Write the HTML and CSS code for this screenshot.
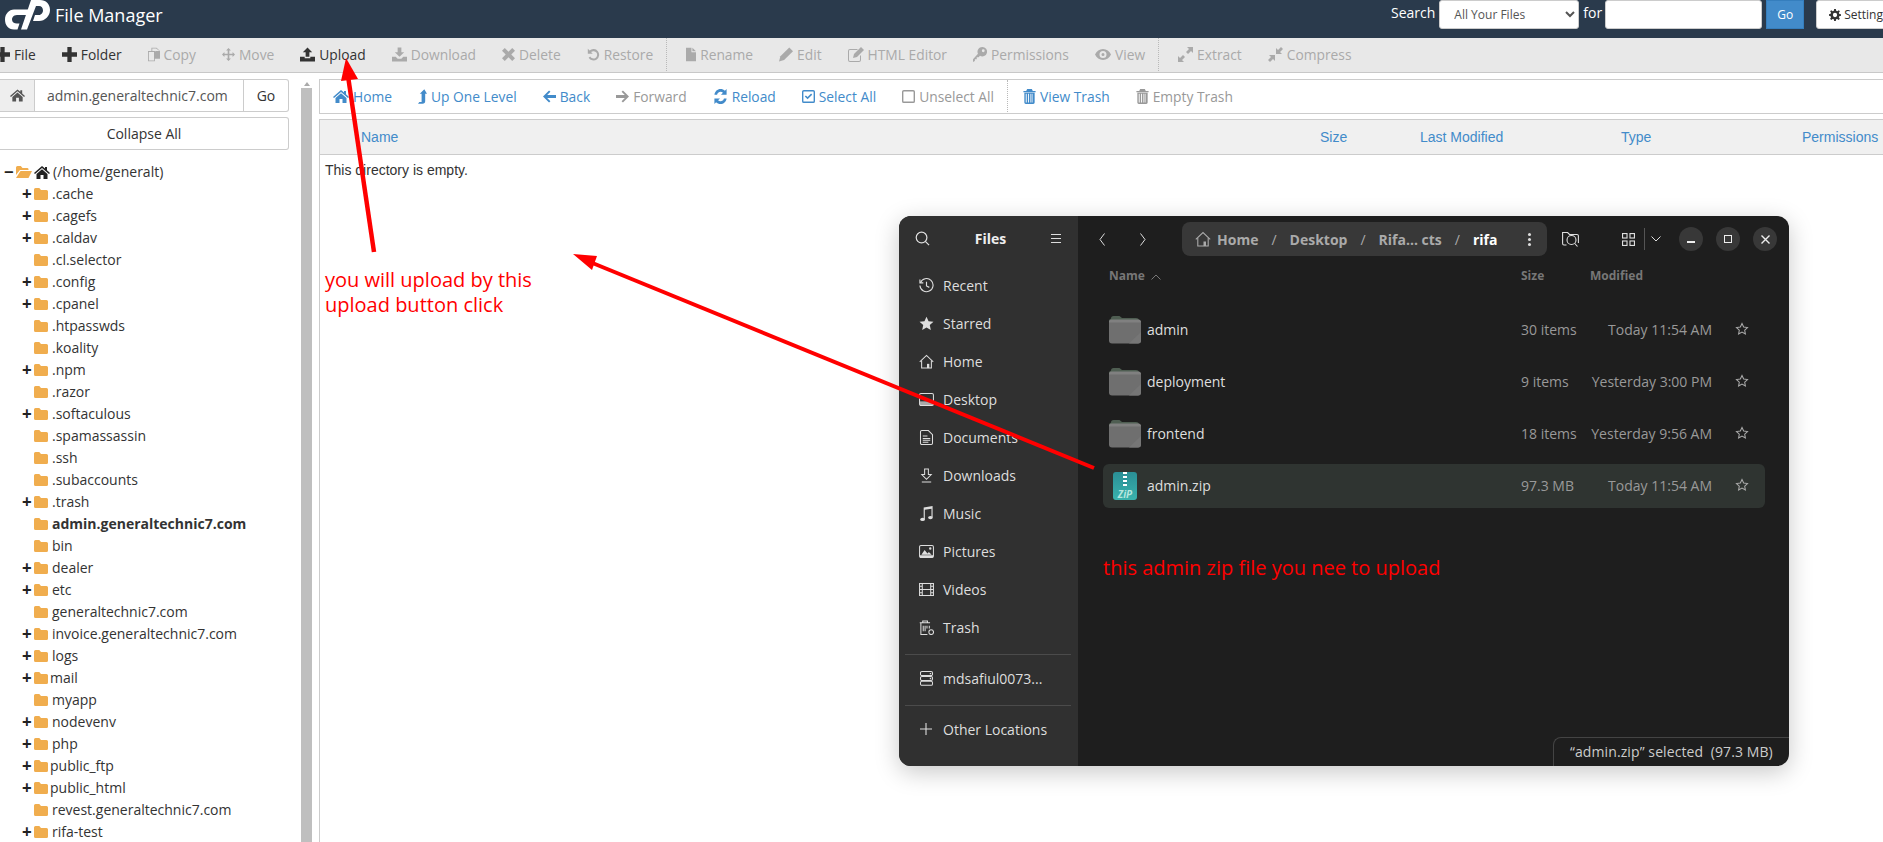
FILE: index.html
```html
<!DOCTYPE html>
<html lang="en">
<head>
    <meta charset="UTF-8">
    <meta name="viewport" content="width=device-width, initial-scale=1.0">
    <title>File Manager</title>
    <link rel="stylesheet" href="styles.css">
</head>
<body>
    <!-- icon sheet -->
    <svg class="icon-sheet" width="0" height="0">
        <symbol id="i-plus" viewBox="0 0 14 14"><path d="M5 0h4v5h5v4H9v5H5V9H0V5h5z"/></symbol>
        <symbol id="i-copy" viewBox="0 0 14 16"><path fill-rule="evenodd" d="M4 0h6l4 4v9H8v3H0V4h4zm1 1v3h3l1 .5V4h4.500L9.500 1zM1 5v10h6V5z"/></symbol>
        <symbol id="i-move" viewBox="0 0 16 16"><path d="M8 0l3 3H9v4h4V5l3 3-3 3V9H9v4h2l-3 3-3-3h2V9H3v2L0 8l3-3v2h4V3H5z"/></symbol>
        <symbol id="i-upload" viewBox="0 0 16 15"><path d="M8 0l5 5h-3v5H6V5H3zM0 10h5v1.500h6V10h5v5H0z"/></symbol>
        <symbol id="i-download" viewBox="0 0 16 15"><path d="M6 0h4v5h3l-5 5-5-5h3zM0 10h4l2 2h4l2-2h4v5H0z"/></symbol>
        <symbol id="i-delete" viewBox="0 0 14 14"><path d="M3 0l4 4 4-4 3 3-4 4 4 4-3 3-4-4-4 4-3-3 4-4-4-4z"/></symbol>
        <symbol id="i-restore" viewBox="0 0 16 16"><path d="M1 1l2.200 2.200A7 7 0 1 1 2 12l2-1.500A4.500 4.500 0 1 0 5 5l2 2H1z"/></symbol>
        <symbol id="i-file" viewBox="0 0 11 15"><path d="M0 0h6v5h5v10H0zM7 0l4 4H7z"/></symbol>
        <symbol id="i-pencil" viewBox="0 0 15 15"><path d="M11 0l4 4-9.500 9.500L0 15l1.500-5.500z"/></symbol>
        <symbol id="i-edit" viewBox="0 0 16 15"><path fill-rule="evenodd" d="M2 2h8L9 3H2a1 1 0 0 0-1 1v9a1 1 0 0 0 1 1h9a1 1 0 0 0 1-1V9l1-1v5a2 2 0 0 1-2 2H2a2 2 0 0 1-2-2V4a2 2 0 0 1 2-2z"/><path d="M13 0l3 3-7 7-4 1 1-4z"/></symbol>
        <symbol id="i-key" viewBox="0 0 15 16"><path fill-rule="evenodd" d="M10 0a5 5 0 1 1-2.500 9.300L6 11H4v2H2v2l-2 1v-3l5.300-5.800A5 5 0 0 1 10 0zm1 2.500a1.500 1.500 0 1 0 0 3 1.500 1.500 0 0 0 0-3z"/></symbol>
        <symbol id="i-eye" viewBox="0 0 16 11"><path fill-rule="evenodd" d="M8 0c3.500 0 6.500 2.200 8 5.500C14.500 8.800 11.500 11 8 11S1.500 8.800 0 5.500C1.500 2.200 4.500 0 8 0zm0 2a3.500 3.500 0 1 0 0 7 3.500 3.500 0 0 0 0-7zM8 4a1.500 1.500 0 1 1 0 3 1.500 1.500 0 0 1 0-3z"/></symbol>
        <symbol id="i-expand" viewBox="0 0 15 15"><path d="M9 0h6v6l-2-2-3 3-2-2 3-3zM5 8l2 2-3 3 2 2H0V9l2 2z"/></symbol>
        <symbol id="i-compress" viewBox="0 0 15 15"><path d="M13 0l2 2-3 3 2 2H8V1l2 2zM1 8h6v6l-2-2-3 3-2-2 3-3z"/></symbol>
        <symbol id="i-home" viewBox="0 0 16 13"><path d="M8 0l3 2.600V1h2v3.300L16 7l-1 1-7-6-7 6-1-1zM8 3.300l5.500 4.700v5H9.500V9h-3v4h-4V8z"/></symbol>
        <symbol id="i-up" viewBox="0 0 10 16"><path d="M7 0l3 5H8v8c0 2-1 3-3 3H0l1.500-2H4V5H2z"/></symbol>
        <symbol id="i-back" viewBox="0 0 14 13"><path d="M6.500 0L8 1.500 4.500 5H14v3H4.500L8 11.500 6.500 13 0 6.500z"/></symbol>
        <symbol id="i-forward" viewBox="0 0 14 13"><path d="M7.500 0L14 6.500 7.500 13 6 11.500 9.500 8H0V5h9.500L6 1.500z"/></symbol>
        <symbol id="i-reload" viewBox="0 0 15 16"><path d="M7.500 0c1.900 0 3.500.7 4.700 1.900L14 0v6H8l2.100-2.100A3.800 3.800 0 0 0 3.800 6H1C1.500 2.600 4.200 0 7.500 0zM1 10h6l-2.100 2.100A3.800 3.800 0 0 0 11.200 10H14c-.5 3.400-3.200 6-6.500 6-1.900 0-3.500-.7-4.700-1.900L1 16z"/></symbol>
        <symbol id="i-checked" viewBox="0 0 14 14"><path fill-rule="evenodd" d="M2 0h10a2 2 0 0 1 2 2v10a2 2 0 0 1-2 2H2a2 2 0 0 1-2-2V2a2 2 0 0 1 2-2zm0 1.500a.5.500 0 0 0-.5.500v10a.5.500 0 0 0 .5.500h10a.5.500 0 0 0 .5-.5V2a.5.500 0 0 0-.5-.5z"/><path d="M3 7l1.200-1.200L6 7.600l3.800-3.800L11 5l-5 5z"/></symbol>
        <symbol id="i-unchecked" viewBox="0 0 14 14"><path fill-rule="evenodd" d="M2 0h10a2 2 0 0 1 2 2v10a2 2 0 0 1-2 2H2a2 2 0 0 1-2-2V2a2 2 0 0 1 2-2zm0 1.500a.5.500 0 0 0-.5.500v10a.5.500 0 0 0 .5.500h10a.5.500 0 0 0 .5-.5V2a.5.500 0 0 0-.5-.5z"/></symbol>
        <symbol id="i-trash" viewBox="0 0 13 16"><path fill-rule="evenodd" d="M4 0h5l1 2h3v1.500H0V2h3zM1 4h11v10.500a1.500 1.500 0 0 1-1.500 1.500h-8A1.500 1.500 0 0 1 1 14.500zm1.500 1v9.500h1V5zm2.500 0v9.500h1V5zm2.500 0v9.500h1V5zm2 0v9.500h.5V5z"/></symbol>
        <symbol id="i-gear" viewBox="0 0 14 14"><path fill-rule="evenodd" d="M6 0h2l.4 2 1.300.5L11.400 1.400l1.300 1.300-1.200 1.700.6 1.300 1.900.3v2l-2 .4-.5 1.300 1.100 1.700-1.300 1.300-1.700-1.100-1.300.5L8 14H6l-.4-1.900-1.300-.5-1.700 1.100-1.300-1.300 1.100-1.700-.5-1.300L0 8V6l1.900-.4.500-1.300-1.100-1.600 1.300-1.300 1.700 1.100 1.300-.5zm1 4.500a2.500 2.500 0 1 0 0 5 2.500 2.500 0 0 0 0-5z"/></symbol>
        <symbol id="i-folder" viewBox="0 0 14 12"><path d="M1.500 0h3.800L7 2h5.500A1.500 1.500 0 0 1 14 3.500v7a1.500 1.500 0 0 1-1.500 1.500h-11A1.500 1.500 0 0 1 0 10.500v-9A1.500 1.500 0 0 1 1.500 0z"/></symbol>
        <symbol id="i-folder-open" viewBox="0 0 16 12"><path d="M1.500 0h3.300L6.500 2h4.700A1.300 1.300 0 0 1 12.500 3.300V4H4L0 9V1.500A1.500 1.500 0 0 1 1.500 0z"/><path d="M4.500 5H16l-3.500 7H0z"/></symbol>
        <symbol id="i-search" viewBox="0 0 16 16"><g fill="none" stroke="currentColor" stroke-width="1.300"><circle cx="7" cy="7" r="5.700"/><path d="M11 11l4 4"/></g></symbol>
        <symbol id="i-recent" viewBox="0 0 16 16"><g fill="none" stroke="currentColor" stroke-width="1.200"><path d="M1.500 5A7 7 0 1 1 1 8"/><path d="M1 1.500V5.200h3.600M8 4v4.500l3 1.500"/></g></symbol>
        <symbol id="i-star" viewBox="0 0 16 16"><path d="M8 .8l2.200 4.800 5.200.6-3.900 3.500 1.100 5.200L8 12.200l-4.600 2.700 1.100-5.200L.6 6.200l5.200-.6z"/></symbol>
        <symbol id="i-star-line" viewBox="0 0 16 16"><path fill="none" stroke="currentColor" stroke-width="1.200" d="M8 1.800l1.900 4 4.400.6-3.200 3 .8 4.400L8 11.600l-3.900 2.200.8-4.400-3.200-3 4.400-.6z"/></symbol>
        <symbol id="i-gnome-home" viewBox="0 0 16 16"><g fill="none" stroke="currentColor" stroke-width="1.100"><path d="M.8 8.300L8 1.500l7.200 6.800"/><path d="M2.800 7v8h10.400V7"/></g><path fill="currentColor" d="M8.500 10.500h2.500V15H8.500z"/></symbol>
        <symbol id="i-desktop" viewBox="0 0 16 14"><g fill="none" stroke="currentColor" stroke-width="1.100"><rect x=".6" y=".6" width="14.800" height="12.800" rx="1.500"/></g><path fill="currentColor" opacity=".7" d="M1 9h14v4H1z"/></symbol>
        <symbol id="i-doc" viewBox="0 0 14 16"><g fill="none" stroke="currentColor" stroke-width="1.100"><path d="M2 .6h7l4.400 4.400V14a1.400 1.400 0 0 1-1.400 1.400H2A1.400 1.400 0 0 1 .6 14V2A1.400 1.400 0 0 1 2 .6z"/><path d="M3 6.500h5M3 9h8M3 11h8M3 13h6"/></g></symbol>
        <symbol id="i-downloads" viewBox="0 0 12 16"><g fill="none" stroke="currentColor" stroke-width="1.100"><path d="M4 1h4v6h3l-5 5-5-5h3zM1 15h10"/></g></symbol>
        <symbol id="i-music" viewBox="0 0 14 16"><path fill="currentColor" d="M4 1.500L13.500 0v12h-1.200V3L5.200 4v10.500H4z"/><ellipse fill="currentColor" cx="2.800" cy="14.300" rx="2.500" ry="1.700"/><ellipse fill="currentColor" cx="11.200" cy="12.300" rx="2.500" ry="1.700"/></symbol>
        <symbol id="i-pictures" viewBox="0 0 16 14"><rect fill="none" stroke="currentColor" stroke-width="1.100" x=".6" y=".6" width="14.800" height="12.800" rx="1.500"/><path fill="currentColor" d="M2.500 10.500L6 5.500l3 3.500 1.500-1.500 3 3zM12 2.500a1.300 1.300 0 1 1 0 2.600 1.300 1.300 0 0 1 0-2.600zM1 11h14v2.500H1z"/></symbol>
        <symbol id="i-videos" viewBox="0 0 16 14"><g fill="none" stroke="currentColor" stroke-width="1.100"><rect x=".6" y=".6" width="14.800" height="12.800"/><path d="M3.500 1v12M12.500 1v12M3.500 7h9M1 3.500h2.500M1 7h2.500M1 10.500h2.500M12.500 3.500H15M12.500 7H15M12.500 10.500H15"/></g></symbol>
        <symbol id="i-gnome-trash" viewBox="0 0 16 16"><g fill="none" stroke="currentColor" stroke-width="1.100"><path d="M.8 3h11M4 3V1h5v2M2 3v12.400h7M4.500 6v6M6.500 6v6M8.500 6v3M11 6v3"/><circle cx="13" cy="13" r="2.500"/></g></symbol>
        <symbol id="i-server" viewBox="0 0 14 16"><g fill="none" stroke="currentColor" stroke-width="1.100"><rect x=".6" y=".6" width="12.800" height="4.300" rx="1.500"/><rect x=".6" y="5.800" width="12.800" height="4.300" rx="1.500"/><rect x=".6" y="11" width="12.800" height="4.300" rx="1.500"/></g><path fill="currentColor" d="M10.500 2h1.500v1.500h-1.500zM10.500 7.200h1.500v1.500h-1.500z"/></symbol>
        <symbol id="i-gnome-plus" viewBox="0 0 12 12"><path fill="none" stroke="currentColor" stroke-width="1.100" d="M6 0v12M0 6h12"/></symbol>
        <symbol id="i-gnome-folder" viewBox="0 0 32 28"><path fill="#4f5e52" d="M2 2.500A2.500 2.500 0 0 1 4.500 0h6L13 2h14a3 3 0 0 1 3 3v6H0V4z"/><path fill="#6f6f6f" d="M3 4h26a3 3 0 0 1 3 3v17.500a3 3 0 0 1-3 3H3a3 3 0 0 1-3-3V7a3 3 0 0 1 3-3z"/><path fill="#808080" d="M0 5.500A2.500 2.500 0 0 1 2.500 3.500h27A2.500 2.500 0 0 1 32 5.500v1H0z"/><path fill="#767676" d="M32 16v8.500a3 3 0 0 1-3 3h-9z"/></symbol>
        <symbol id="i-chev-left" viewBox="0 0 6 13"><path fill="none" stroke="currentColor" stroke-width="1" d="M5.500 .5L1 6.500l4.500 6"/></symbol>
        <symbol id="i-chev-right" viewBox="0 0 6 13"><path fill="none" stroke="currentColor" stroke-width="1" d="M.5 .5L5 6.500l-4.500 6"/></symbol>
        <symbol id="i-chev-down" viewBox="0 0 10 6"><path fill="none" stroke="currentColor" stroke-width="1" d="M.5 .5L5 5l4.500-4.500"/></symbol>
        <symbol id="i-cross" viewBox="0 0 9 9"><path fill="none" stroke="currentColor" stroke-width="1.400" d="M.5 .5l8 8M8.500 .5l-8 8"/></symbol>
    </svg>

    <header class="top-bar">
        <div class="brand">
            <svg class="brand-logo" viewBox="0 0 50 30" width="50" height="30">
                <path fill="#fff" d="M14 9.500H29L27 15H17C13 15 12 18 12 19.500C12 22 14 23.500 17 23.500H19.500L17.500 29.500H14C8 29.500 5 25 5 19.500C5 14 9 9.500 14 9.500Z"/>
                <path fill="#fff" d="M31 0H40C46 0 50 4 50 10C50 16 45 21 39 21H33L35 15H39C41.500 15 43 12.500 43 10.500C43 8 41.500 6 39 6H36L27 29.500H21Z"/>
            </svg>
            <span class="brand-name">File Manager</span>
        </div>
        <form class="search-form">
            <label class="search-label">Search</label>
            <select class="search-scope"><option>All Your Files</option></select>
            <label class="search-for">for</label>
            <input class="search-input" type="text">
            <button class="search-go" type="button">Go</button>
            <button class="settings-btn" type="button"><svg class="ico ico-gear"><use href="#i-gear"/></svg>Settings</button>
        </form>
    </header>

    <div class="toolbar">
        <a class="tool tool-on tool-first"><svg class="ico"><use href="#i-plus"/></svg>File</a>
        <a class="tool tool-on"><svg class="ico"><use href="#i-plus"/></svg>Folder</a>
        <a class="tool"><svg class="ico ico-12"><use href="#i-copy"/></svg>Copy</a>
        <a class="tool"><svg class="ico ico-13"><use href="#i-move"/></svg>Move</a>
        <a class="tool tool-on"><svg class="ico"><use href="#i-upload"/></svg>Upload</a>
        <a class="tool"><svg class="ico"><use href="#i-download"/></svg>Download</a>
        <a class="tool"><svg class="ico ico-13"><use href="#i-delete"/></svg>Delete</a>
        <a class="tool"><svg class="ico ico-13"><use href="#i-restore"/></svg>Restore</a>
        <span class="tool-sep"></span>
        <a class="tool"><svg class="ico ico-10"><use href="#i-file"/></svg>Rename</a>
        <a class="tool"><svg class="ico ico-14"><use href="#i-pencil"/></svg>Edit</a>
        <a class="tool"><svg class="ico ico-16"><use href="#i-edit"/></svg>HTML Editor</a>
        <a class="tool"><svg class="ico ico-14"><use href="#i-key"/></svg>Permissions</a>
        <a class="tool"><svg class="ico ico-16"><use href="#i-eye"/></svg>View</a>
        <span class="tool-sep"></span>
        <a class="tool"><svg class="ico"><use href="#i-expand"/></svg>Extract</a>
        <a class="tool"><svg class="ico"><use href="#i-compress"/></svg>Compress</a>
    </div>

    <main class="workspace">
        <aside class="sidebar">
            <div class="path-box">
                <span class="path-home"><svg class="ico ico-dark"><use href="#i-home"/></svg></span>
                <span class="path-value">admin.generaltechnic7.com</span>
                <span class="path-go">Go</span>
            </div>
            <button class="collapse-btn" type="button">Collapse All</button>
            <ul class="tree">
                <li class="tree-root"><span class="toggle">&minus;</span><svg class="folder folder-open"><use href="#i-folder-open"/></svg><svg class="root-home"><use href="#i-home"/></svg>(/home/generalt)</li>
                <li><span class="toggle">+</span><svg class="folder"><use href="#i-folder"/></svg>.cache</li>
                <li><span class="toggle">+</span><svg class="folder"><use href="#i-folder"/></svg>.cagefs</li>
                <li><span class="toggle">+</span><svg class="folder"><use href="#i-folder"/></svg>.caldav</li>
                <li><span class="toggle"></span><svg class="folder"><use href="#i-folder"/></svg>.cl.selector</li>
                <li><span class="toggle">+</span><svg class="folder"><use href="#i-folder"/></svg>.config</li>
                <li><span class="toggle">+</span><svg class="folder"><use href="#i-folder"/></svg>.cpanel</li>
                <li><span class="toggle"></span><svg class="folder"><use href="#i-folder"/></svg>.htpasswds</li>
                <li><span class="toggle"></span><svg class="folder"><use href="#i-folder"/></svg>.koality</li>
                <li><span class="toggle">+</span><svg class="folder"><use href="#i-folder"/></svg>.npm</li>
                <li><span class="toggle"></span><svg class="folder"><use href="#i-folder"/></svg>.razor</li>
                <li><span class="toggle">+</span><svg class="folder"><use href="#i-folder"/></svg>.softaculous</li>
                <li><span class="toggle"></span><svg class="folder"><use href="#i-folder"/></svg>.spamassassin</li>
                <li><span class="toggle"></span><svg class="folder"><use href="#i-folder"/></svg>.ssh</li>
                <li><span class="toggle"></span><svg class="folder"><use href="#i-folder"/></svg>.subaccounts</li>
                <li><span class="toggle">+</span><svg class="folder"><use href="#i-folder"/></svg>.trash</li>
                <li class="tree-current"><span class="toggle"></span><svg class="folder"><use href="#i-folder"/></svg>admin.generaltechnic7.com</li>
                <li><span class="toggle"></span><svg class="folder"><use href="#i-folder"/></svg>bin</li>
                <li><span class="toggle">+</span><svg class="folder"><use href="#i-folder"/></svg>dealer</li>
                <li><span class="toggle">+</span><svg class="folder"><use href="#i-folder"/></svg>etc</li>
                <li><span class="toggle"></span><svg class="folder"><use href="#i-folder"/></svg>generaltechnic7.com</li>
                <li><span class="toggle">+</span><svg class="folder"><use href="#i-folder"/></svg>invoice.generaltechnic7.com</li>
                <li><span class="toggle">+</span><svg class="folder"><use href="#i-folder"/></svg>logs</li>
                <li class="tree-tight"><span class="toggle">+</span><svg class="folder"><use href="#i-folder"/></svg>mail</li>
                <li><span class="toggle"></span><svg class="folder"><use href="#i-folder"/></svg>myapp</li>
                <li><span class="toggle">+</span><svg class="folder"><use href="#i-folder"/></svg>nodevenv</li>
                <li><span class="toggle">+</span><svg class="folder"><use href="#i-folder"/></svg>php</li>
                <li class="tree-tight"><span class="toggle">+</span><svg class="folder"><use href="#i-folder"/></svg>public_ftp</li>
                <li class="tree-tight"><span class="toggle">+</span><svg class="folder"><use href="#i-folder"/></svg>public_html</li>
                <li><span class="toggle"></span><svg class="folder"><use href="#i-folder"/></svg>revest.generaltechnic7.com</li>
                <li><span class="toggle">+</span><svg class="folder"><use href="#i-folder"/></svg>rifa-test</li>
            </ul>
        </aside>

        <div class="splitter">
            <span class="splitter-arrow"></span>
            <span class="splitter-thumb"></span>
        </div>

        <section class="content">
            <nav class="nav-bar">
                <a class="nav-link"><svg class="ico ico-16"><use href="#i-home"/></svg>Home</a>
                <a class="nav-link"><svg class="ico ico-9"><use href="#i-up"/></svg>Up One Level</a>
                <a class="nav-link"><svg class="ico ico-13"><use href="#i-back"/></svg>Back</a>
                <a class="nav-link nav-off"><svg class="ico ico-13"><use href="#i-forward"/></svg>Forward</a>
                <a class="nav-link"><svg class="ico"><use href="#i-reload"/></svg>Reload</a>
                <a class="nav-link"><svg class="ico ico-13"><use href="#i-checked"/></svg>Select All</a>
                <a class="nav-link nav-off"><svg class="ico ico-13"><use href="#i-unchecked"/></svg>Unselect All</a>
                <span class="nav-sep"></span>
                <a class="nav-link"><svg class="ico ico-13"><use href="#i-trash"/></svg>View Trash</a>
                <a class="nav-link nav-off"><svg class="ico ico-13"><use href="#i-trash"/></svg>Empty Trash</a>
            </nav>
            <div class="list-pane">
                <div class="list-head">
                    <span class="col-name">Name</span>
                    <span class="col-size">Size</span>
                    <span class="col-date">Last Modified</span>
                    <span class="col-type">Type</span>
                    <span class="col-perm">Permissions</span>
                </div>
                <p class="list-empty">This directory is empty.</p>
            </div>
        </section>
    </main>

    <!-- screenshot pasted over the page -->
    <div class="files-win">
        <div class="files-side">
            <div class="side-head">
                <svg class="g-ico"><use href="#i-search"/></svg>
                <span class="side-title">Files</span>
                <span class="burger"></span>
            </div>
            <ul class="places">
                <li><svg class="g-ico"><use href="#i-recent"/></svg>Recent</li>
                <li><svg class="g-ico"><use href="#i-star"/></svg>Starred</li>
                <li><svg class="g-ico"><use href="#i-gnome-home"/></svg>Home</li>
                <li><svg class="g-ico"><use href="#i-desktop"/></svg>Desktop</li>
                <li><svg class="g-ico"><use href="#i-doc"/></svg>Documents</li>
                <li><svg class="g-ico"><use href="#i-downloads"/></svg>Downloads</li>
                <li><svg class="g-ico"><use href="#i-music"/></svg>Music</li>
                <li><svg class="g-ico"><use href="#i-pictures"/></svg>Pictures</li>
                <li><svg class="g-ico"><use href="#i-videos"/></svg>Videos</li>
                <li><svg class="g-ico"><use href="#i-gnome-trash"/></svg>Trash</li>
            </ul>
            <ul class="places places-split">
                <li><svg class="g-ico"><use href="#i-server"/></svg>mdsafiul0073...</li>
            </ul>
            <ul class="places places-split">
                <li><svg class="g-ico g-ico-plus"><use href="#i-gnome-plus"/></svg>Other Locations</li>
            </ul>
        </div>
        <div class="files-main">
            <div class="files-head">
                <svg class="chev chev-left"><use href="#i-chev-left"/></svg>
                <svg class="chev chev-right"><use href="#i-chev-right"/></svg>
                <div class="crumbs">
                    <svg class="g-ico crumb-home"><use href="#i-gnome-home"/></svg>
                    <span class="crumb">Home</span><span class="crumb-sep">/</span>
                    <span class="crumb">Desktop</span><span class="crumb-sep">/</span>
                    <span class="crumb">Rifa... cts</span><span class="crumb-sep">/</span>
                    <span class="crumb crumb-now">rifa</span>
                    <span class="kebab"></span>
                </div>
                <svg class="g-ico find-ico" viewBox="0 0 17 16"><g fill="none" stroke="currentColor" stroke-width="1.100"><path d="M4.500 14H2a1.400 1.400 0 0 1-1.400-1.400V1.500h5L7.500 3.500h7.500a1.400 1.400 0 0 1 1.400 1.400V12"/><circle cx="9.500" cy="9" r="4.500"/><path d="M12.800 12.500l2.700 3"/></g></svg>
                <svg class="g-ico grid-ico" viewBox="0 0 14 14"><g fill="none" stroke="currentColor" stroke-width="1.200"><rect x=".6" y=".6" width="4.800" height="4.800"/><rect x="8.600" y=".6" width="4.800" height="4.800"/><rect x=".6" y="8.600" width="4.800" height="4.800"/><rect x="8.600" y="8.600" width="4.800" height="4.800"/></g></svg>
                <span class="head-sep"></span>
                <svg class="chev-down"><use href="#i-chev-down"/></svg>
                <span class="win-btn win-btn-first"><span class="win-min"></span></span>
                <span class="win-btn"><span class="win-max"></span></span>
                <span class="win-btn"><svg class="win-close"><use href="#i-cross"/></svg></span>
            </div>
            <div class="files-cols">
                <span class="fc-name">Name</span><svg class="chev-up"><use href="#i-chev-down"/></svg>
                <span class="fc-size">Size</span>
                <span class="fc-date">Modified</span>
            </div>
            <div class="file-row">
                <svg class="row-ico"><use href="#i-gnome-folder"/></svg>
                <span class="file-name">admin</span>
                <span class="file-size">30 items</span>
                <span class="file-date">Today 11:54 AM</span>
                <svg class="file-star"><use href="#i-star-line"/></svg>
            </div>
            <div class="file-row">
                <svg class="row-ico"><use href="#i-gnome-folder"/></svg>
                <span class="file-name">deployment</span>
                <span class="file-size">9 items</span>
                <span class="file-date">Yesterday 3:00 PM</span>
                <svg class="file-star"><use href="#i-star-line"/></svg>
            </div>
            <div class="file-row">
                <svg class="row-ico"><use href="#i-gnome-folder"/></svg>
                <span class="file-name">frontend</span>
                <span class="file-size">18 items</span>
                <span class="file-date">Yesterday 9:56 AM</span>
                <svg class="file-star"><use href="#i-star-line"/></svg>
            </div>
            <div class="file-row file-row-sel">
                <span class="zip-ico"><span class="zip-teeth"></span><span class="zip-label">ZiP</span></span>
                <span class="file-name">admin.zip</span>
                <span class="file-size">97.3 MB</span>
                <span class="file-date">Today 11:54 AM</span>
                <svg class="file-star"><use href="#i-star-line"/></svg>
            </div>
            <div class="status-pill">&ldquo;admin.zip&rdquo; selected&nbsp; (97.3 MB)</div>
        </div>
    </div>

    <!-- red notes drawn on top -->
    <p class="note note-upload">you will upload by this<br>upload button click</p>
    <p class="note note-zip">this admin zip file you nee to upload</p>
    <svg class="arrows" width="1883" height="842">
        <path d="M374 252L348 76" stroke="#f00" stroke-width="4.500" fill="none"/>
        <path d="M346 58L341 81L358 79z" fill="#f00"/>
        <path d="M1094 468L590 262" stroke="#f00" stroke-width="4" fill="none"/>
        <path d="M573 254L597 256L592 270z" fill="#f00"/>
    </svg>
</body>
</html>
```

FILE: styles.css
```css
/* General */
html, body {
    height: 100%;
}

body {
    margin: 0;
    font-family: "Open Sans", Arial, sans-serif;
    font-size: 14px;
    color: #333;
    background-color: white;
    overflow: hidden;
    position: relative;
    width: 1883px;
    height: 842px;
}

.icon-sheet {
    position: absolute;
}

.ico {
    width: 15px;
    height: 15px;
    margin-right: 4px;
    fill: currentColor;
    flex: none;
}

.ico-9 { width: 9px; }
.ico-10 { width: 10px; }
.ico-12 { width: 12px; }
.ico-13 { width: 13px; }
.ico-14 { width: 14px; }
.ico-16 { width: 16px; }

/* Top bar */
.top-bar {
    height: 38px;
    background-color: #2a3a4c;
    display: flex;
    justify-content: space-between;
}

.brand {
    display: flex;
    align-items: flex-start;
}

.brand-logo {
    flex: none;
}

.brand-name {
    color: white;
    font-size: 18px;
    line-height: 30px;
    margin-left: 5px;
}

.search-form {
    display: flex;
    align-items: flex-start;
    flex: none;
    margin: 0;
    height: 29px;
    width: 492px;
}

.search-label, .search-for {
    color: white;
    font-size: 14px;
    line-height: 26px;
    flex: none;
}

.search-scope {
    width: 140px;
    height: 29px;
    flex: none;
    margin: 0 4px;
    padding: 0 0 0 10px;
    font-family: inherit;
    font-size: 12px;
    color: #555;
    background-color: white;
    border: 1px solid #ccc;
    border-radius: 3px;
}

.search-input {
    width: 157px;
    height: 29px;
    flex: none;
    box-sizing: border-box;
    margin: 0 4px 0 3px;
    background-color: white;
    border: 1px solid #ccc;
    border-radius: 3px;
}

.search-go {
    width: 38px;
    height: 29px;
    flex: none;
    padding: 0;
    font-family: inherit;
    font-size: 12px;
    color: white;
    background-color: #428bca;
    border: 1px solid #357ebd;
}

.settings-btn {
    display: flex;
    align-items: center;
    width: 90px;
    height: 29px;
    flex: none;
    margin: 0 0 0 12px;
    padding: 0 0 0 12px;
    font-family: inherit;
    font-size: 12px;
    color: #333;
    background-color: white;
    border: 1px solid #ccc;
    border-radius: 3px;
}

.ico-gear {
    width: 12px;
    height: 12px;
    margin-right: 3px;
}

/* Toolbar */
.toolbar {
    height: 33px;
    padding-bottom: 1px;
    background-color: #e8e8e8;
    border-bottom: 1px solid #c8c8c8;
    display: flex;
    align-items: center;
    gap: 26px;
    font-size: 13.8px;
}

.tool {
    display: flex;
    align-items: center;
    color: #aaa;
    white-space: nowrap;
}

.tool-on {
    color: #333;
}

.tool-first {
    margin-left: -5px;
}

.tool-sep {
    align-self: stretch;
    border-left: 1px dotted #b9b9b9;
    margin: 0 -7px 0 -13px;
}

/* Workspace */
.workspace {
    display: flex;
    height: 769px;
}

.sidebar {
    width: 301px;
    flex: none;
    padding-top: 6px;
    box-sizing: border-box;
}

.path-box {
    display: flex;
    width: 289px;
    height: 33px;
    box-sizing: border-box;
    border: 1px solid #ccc;
    border-left: 0;
    border-radius: 0 3px 3px 0;
    line-height: 31px;
}

.path-home {
    width: 35px;
    background-color: #eee;
    border-right: 1px solid #ccc;
    color: #555;
    display: flex;
    align-items: center;
    justify-content: center;
    box-sizing: border-box;
}

.ico-dark {
    margin-right: 0;
}

.path-value {
    flex: 1;
    padding-left: 12px;
    color: #555;
}

.path-go {
    width: 45px;
    text-align: center;
    border-left: 1px solid #ccc;
    box-sizing: border-box;
}

.collapse-btn {
    display: block;
    width: 289px;
    height: 33px;
    margin-top: 5px;
    font-family: inherit;
    font-size: 14px;
    color: #333;
    background-color: white;
    border: 1px solid #ccc;
    border-left: 0;
    border-radius: 0 3px 3px 0;
}

/* Tree */
.tree {
    list-style: none;
    margin: 11px 0 0 0;
    padding: 0;
}

.tree li {
    height: 22px;
    line-height: 22px;
    display: flex;
    align-items: center;
    padding-left: 22px;
    white-space: nowrap;
}

.tree .tree-root {
    padding-left: 4px;
}

.tree-current {
    font-weight: bold;
}

.toggle {
    width: 12px;
    flex: none;
    font-size: 17px;
    font-weight: bold;
    line-height: 20px;
    color: #222;
}

.folder {
    width: 14px;
    height: 12px;
    fill: #f0ad4e;
    margin-right: 4px;
    flex: none;
}

.tree-tight .folder {
    margin-right: 2px;
}

.folder-open {
    width: 16px;
    margin-right: 2px;
}

.root-home {
    width: 16px;
    height: 13px;
    fill: #222;
    margin-right: 3px;
    flex: none;
}

/* Splitter */
.splitter {
    width: 11px;
    flex: none;
    margin-top: 6px;
    display: flex;
    flex-direction: column;
}

.splitter-arrow {
    width: 0;
    height: 0;
    margin: 3px auto 2px auto;
    border-left: 3.5px solid transparent;
    border-right: 3.5px solid transparent;
    border-bottom: 4px solid #aaa;
}

.splitter-thumb {
    flex: 1;
    background-color: #bfbfbf;
}

/* Content */
.content {
    flex: 1;
    margin-left: 7px;
    padding-top: 6px;
    min-width: 0;
}

.nav-bar {
    height: 35px;
    box-sizing: border-box;
    border: 1px solid #ccc;
    border-right: 0;
    display: flex;
    align-items: center;
    gap: 26px;
    padding: 0 0 1px 13px;
    font-size: 13.8px;
}

.nav-link {
    display: flex;
    align-items: center;
    color: #428bca;
    white-space: nowrap;
}

.nav-off {
    color: #999;
}

.nav-sep {
    align-self: stretch;
    border-left: 1px dotted #b9b9b9;
    margin: 0 -11px 0 -13px;
}

.list-pane {
    margin-top: 5px;
    height: 722px;
    border-left: 1px solid #ccc;
    border-top: 1px solid #ccc;
}

.list-head {
    height: 35px;
    box-sizing: border-box;
    background-color: #f0f0f0;
    border-bottom: 1px solid #ccc;
    display: grid;
    grid-template-columns: 41px 959px 100px 201px 181px 1fr;
    align-items: center;
    font-family: "Liberation Sans", Arial, sans-serif;
    color: #428bca;
}

.col-name {
    grid-column: 2;
}

.list-empty {
    margin: 0;
    padding: 7px 5px;
    font-family: "Liberation Sans", Arial, sans-serif;
    line-height: 16px;
}

/* Files window */
.files-win {
    position: absolute;
    left: 899px;
    top: 216px;
    width: 890px;
    height: 550px;
    display: flex;
    border-radius: 12px;
    overflow: hidden;
    box-shadow: 0 6px 24px rgba(0, 0, 0, 0.22);
    font-family: "Open Sans", sans-serif;
    color: #dedede;
    background-color: #1e1e1e;
}

.files-side {
    width: 179px;
    flex: none;
    background-color: #303030;
}

.side-head {
    height: 45px;
    display: flex;
    align-items: center;
    padding: 0 17px 0 16px;
    justify-content: space-between;
}

.side-title {
    font-weight: bold;
    color: #eee;
}

.burger {
    width: 10px;
    height: 9px;
    box-sizing: border-box;
    border-top: 1px solid #ddd;
    border-bottom: 1px solid #ddd;
    background: linear-gradient(#ddd, #ddd) center / 100% 1px no-repeat;
}

.g-ico {
    width: 15px;
    height: 15px;
    fill: currentColor;
    flex: none;
}

.g-ico-plus {
    width: 12px;
    height: 12px;
    margin: 0 2px 0 1px;
}

.places {
    list-style: none;
    margin: 6px 0 0 0;
    padding: 0;
}

.places li {
    height: 38px;
    box-sizing: border-box;
    padding: 0 0 2px 20px;
    display: flex;
    align-items: center;
    gap: 9px;
    font-size: 14px;
}

.places-split {
    margin: 7px 7px 0 6px;
    padding-top: 5px;
    border-top: 1px solid #4b4b4b;
}

.places-split li {
    padding-left: 14px;
}

.files-main {
    flex: 1;
    position: relative;
    min-width: 0;
}

.files-head {
    height: 46px;
    display: flex;
    align-items: center;
}

.chev {
    width: 6px;
    height: 13px;
    flex: none;
    color: #ddd;
}

.chev-left {
    margin-left: 21px;
}

.chev-right {
    margin-left: 35px;
}

.chev-down {
    width: 10px;
    height: 6px;
    flex: none;
    color: #ddd;
    margin-left: 6px;
}

.chev-up {
    width: 10px;
    height: 6px;
    color: #777;
    position: absolute;
    left: 73px;
    top: 4px;
    transform: rotate(180deg);
}

.crumbs {
    width: 365px;
    height: 34px;
    margin-left: 36px;
    flex: none;
    box-sizing: border-box;
    background-color: #383838;
    border-radius: 8px;
    display: flex;
    align-items: center;
    padding-left: 13px;
    color: #aaa;
    font-weight: bold;
    font-size: 14px;
}

.crumb-home {
    width: 16px;
    height: 16px;
    margin-right: 6px;
}

.crumb-sep {
    margin: 0 13px;
    font-weight: normal;
}

.crumb-now {
    color: white;
}

.kebab {
    width: 3px;
    height: 3px;
    border-radius: 50%;
    background-color: #ddd;
    box-shadow: 0 -5px 0 #ddd, 0 5px 0 #ddd;
    margin-left: auto;
    margin-right: 16px;
}

.find-ico {
    width: 17px;
    height: 16px;
    margin-left: 15px;
}

.grid-ico {
    width: 13px;
    height: 13px;
    margin-left: 43px;
}

.head-sep {
    width: 1px;
    height: 22px;
    background-color: #555;
    margin-left: 9px;
}

.win-btn {
    width: 24px;
    height: 24px;
    flex: none;
    border-radius: 50%;
    background-color: #383838;
    margin-left: 13px;
    display: flex;
    align-items: center;
    justify-content: center;
    color: #eee;
}

.win-btn-first {
    margin-left: 18px;
}

.win-min {
    width: 8px;
    height: 1.5px;
    margin-top: 6px;
    background-color: #eee;
}

.win-max {
    width: 6px;
    height: 6px;
    border: 1.5px solid #eee;
}

.win-close {
    width: 9px;
    height: 9px;
}

.files-cols {
    position: relative;
    height: 12px;
    margin-top: 8px;
    font-size: 12px;
    font-weight: bold;
    line-height: 12px;
    color: #777;
}

.fc-name {
    position: absolute;
    left: 31px;
}

.fc-size {
    position: absolute;
    left: 443px;
}

.fc-date {
    position: absolute;
    left: 512px;
}

.file-row {
    height: 44px;
    box-sizing: border-box;
    padding-bottom: 2px;
    margin: 8px 24px 0 25px;
    display: flex;
    align-items: center;
    border-radius: 6px;
    font-size: 14px;
}

.files-cols + .file-row {
    margin-top: 26px;
}

.file-row-sel {
    background-color: #2f3431;
}

.row-ico {
    width: 32px;
    height: 28px;
    margin: 2px 0 0 6px;
    flex: none;
}

.file-name {
    margin-left: 6px;
    width: 374px;
    flex: none;
}

.file-size {
    width: 60px;
    flex: none;
    color: #999;
}

.file-date {
    width: 131px;
    flex: none;
    text-align: right;
    white-space: nowrap;
    color: #999;
}

.file-star {
    width: 14px;
    height: 14px;
    margin-left: 23px;
    color: #aaa;
    flex: none;
}

.zip-ico {
    width: 24px;
    height: 28px;
    margin: 2px 4px 0 10px;
    border-radius: 3px;
    background: linear-gradient(#2a8f96, #3ab2ac);
    position: relative;
    flex: none;
    display: block;
}

.zip-teeth {
    position: absolute;
    left: 10px;
    top: 0;
    width: 4px;
    height: 14px;
    background: repeating-linear-gradient(#fff 0 2px, #2a8f96 2px 4px);
}

.zip-label {
    position: absolute;
    left: 0;
    right: 0;
    bottom: 1px;
    text-align: center;
    font-size: 10px;
    line-height: 10px;
    font-weight: bold;
    font-style: italic;
    color: #b5e6df;
}

.status-pill {
    position: absolute;
    right: 0;
    bottom: 0;
    width: 236px;
    height: 29px;
    box-sizing: border-box;
    border: 1px solid #444;
    border-right: 0;
    border-bottom: 0;
    border-radius: 8px 0 0 0;
    line-height: 28px;
    padding-left: 16px;
    font-size: 14px;
    letter-spacing: 0.1px;
    color: #ccc;
    white-space: nowrap;
}

/* Annotations */
.note {
    position: absolute;
    margin: 0;
    color: #f00;
    font-family: "Open Sans", sans-serif;
    font-size: 20px;
    line-height: 25px;
}

.note-upload {
    left: 325px;
    top: 267px;
}

.note-zip {
    left: 1103px;
    top: 555px;
}

.arrows {
    position: absolute;
    left: 0;
    top: 0;
    pointer-events: none;
}
```
